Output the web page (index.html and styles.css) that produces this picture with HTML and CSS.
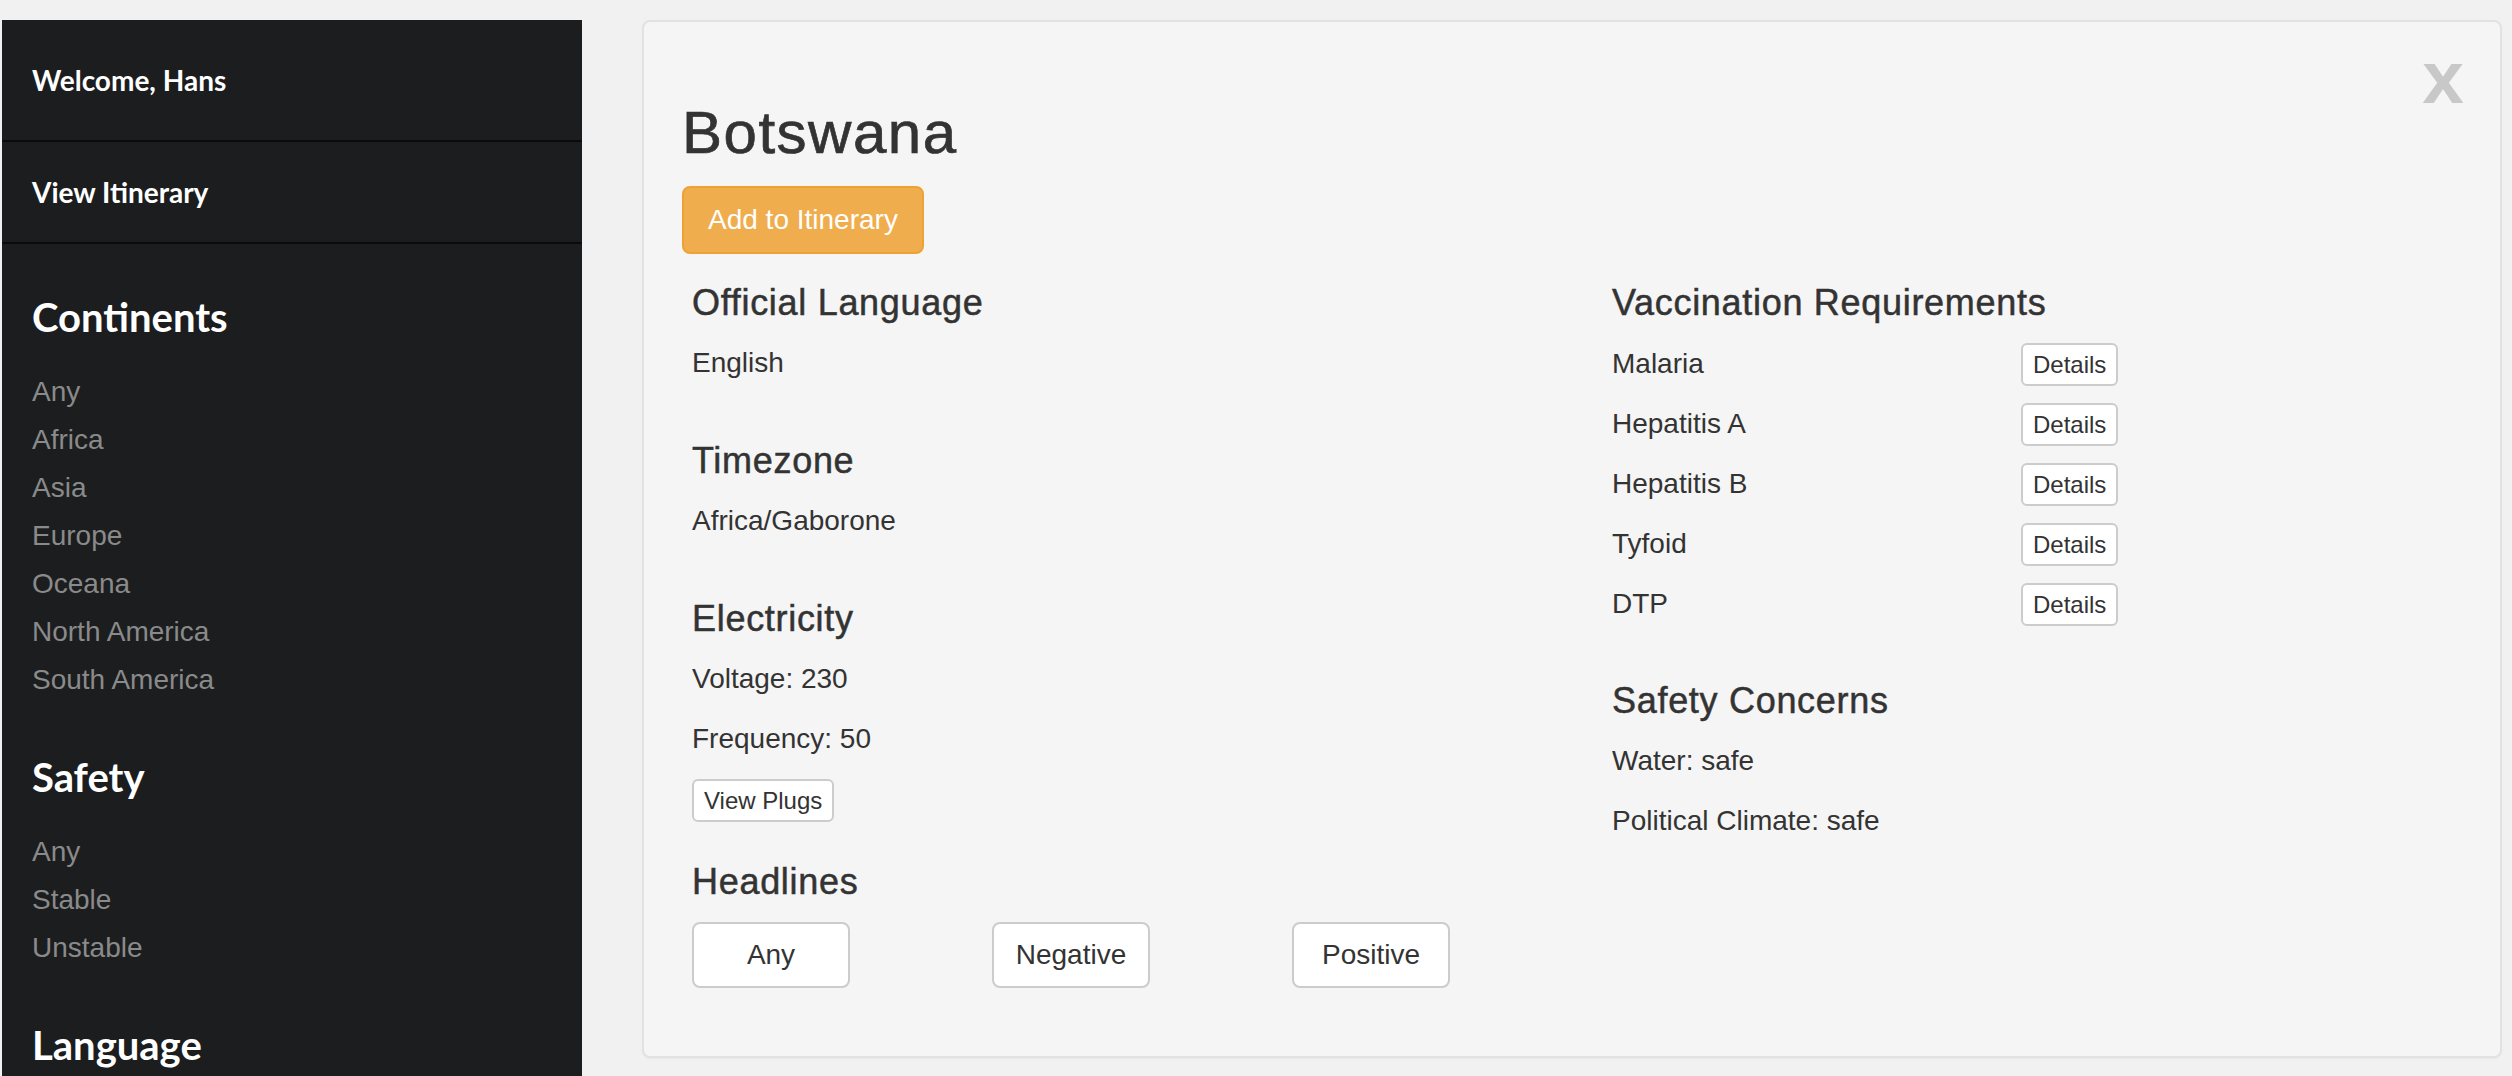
FILE: index.html
```html
<!DOCTYPE html>
<html lang="en">
<head>
<meta charset="utf-8">
<title>Botswana</title>
<link rel="stylesheet" href="styles.css">
</head>
<body>
<div class="page">
  <aside class="sidebar">
    <div class="nav-item welcome">Welcome, Hans</div>
    <div class="nav-item itinerary">View Itinerary</div>
    <div class="filter">
      <h2>Continents</h2>
      <ul>
        <li>Any</li>
        <li>Africa</li>
        <li>Asia</li>
        <li>Europe</li>
        <li>Oceana</li>
        <li>North America</li>
        <li>South America</li>
      </ul>
    </div>
    <div class="filter">
      <h2>Safety</h2>
      <ul>
        <li>Any</li>
        <li>Stable</li>
        <li>Unstable</li>
      </ul>
    </div>
    <div class="filter">
      <h2>Language</h2>
    </div>
  </aside>
  <main class="main">
    <section class="card">
      <span class="close">x</span>
      <h1>Botswana</h1>
      <div class="actions"><button class="btn btn-add">Add to Itinerary</button></div>
      <div class="cols">
        <div class="col">
          <div class="info">
            <h4>Official Language</h4>
            <p>English</p>
          </div>
          <div class="info">
            <h4>Timezone</h4>
            <p>Africa/Gaborone</p>
          </div>
          <div class="info">
            <h4>Electricity</h4>
            <p>Voltage: 230</p>
            <p>Frequency: 50</p>
            <div class="plugs"><button class="btn btn-xs">View Plugs</button></div>
          </div>
          <div class="info">
            <h4>Headlines</h4>
            <div class="headlines">
              <div><button class="btn btn-default">Any</button></div>
              <div><button class="btn btn-default">Negative</button></div>
              <div><button class="btn btn-default">Positive</button></div>
            </div>
          </div>
        </div>
        <div class="col">
          <div class="info">
            <h4>Vaccination Requirements</h4>
            <div class="vlist">
              <div class="vrow"><span class="vname">Malaria</span><button class="btn btn-xs">Details</button></div>
              <div class="vrow"><span class="vname">Hepatitis A</span><button class="btn btn-xs">Details</button></div>
              <div class="vrow"><span class="vname">Hepatitis B</span><button class="btn btn-xs">Details</button></div>
              <div class="vrow"><span class="vname">Tyfoid</span><button class="btn btn-xs">Details</button></div>
              <div class="vrow"><span class="vname">DTP</span><button class="btn btn-xs">Details</button></div>
            </div>
          </div>
          <div class="info">
            <h4>Safety Concerns</h4>
            <p>Water: safe</p>
            <p>Political Climate: safe</p>
          </div>
        </div>
      </div>
    </section>
  </main>
</div>
</body>
</html>
```

FILE: styles.css
```css
* { box-sizing: border-box; }

html, body {
  margin: 0;
  padding: 0;
}

body {
  background: #f1f1f1;
  color: #333333;
  font-family: "Liberation Sans", Arial, Helvetica, sans-serif;
}

.page {
  display: flex;
  height: 100vh;
  overflow: hidden;
}

/* Sidebar */
.sidebar {
  width: 580px;
  flex-shrink: 0;
  margin: 20px 0 0 2px;
  background: #1c1d1f;
}

.nav-item {
  font-family: Lato, "Liberation Sans", sans-serif;
  font-weight: 700;
  font-size: 28px;
  line-height: 40px;
  color: #ffffff;
  padding: 0 30px;
  border-bottom: 2px solid #0b0b0c;
}

.welcome { padding-top: 40px; padding-bottom: 40px; }
.itinerary { padding-top: 30px; padding-bottom: 30px; }

.filter {
  padding: 0 30px;
}

.filter h2 {
  font-family: Lato, "Liberation Sans", sans-serif;
  font-weight: 700;
  font-size: 40px;
  line-height: 48px;
  color: #ffffff;
  margin: 49px 0 27px;
}

.filter ul {
  list-style: none;
  margin: 0;
  padding: 0;
}

.filter li {
  font-size: 28px;
  line-height: 48px;
  color: #8a8a8a;
}

/* Main */
.main {
  flex: 1;
  min-width: 0;
  display: flex;
  flex-direction: column;
  padding: 20px 10px 18px 60px;
}

.card {
  flex: 1;
  position: relative;
  background: #f5f5f5;
  border: 2px solid #e2e2e2;
  border-radius: 8px;
  padding: 0 38px;
  box-shadow: 0 1px 2px rgba(0, 0, 0, 0.04);
}

.close {
  position: absolute;
  top: 18px;
  right: 36px;
  font-size: 75px;
  line-height: 75px;
  font-weight: 700;
  color: #c8c8c8;
}

.card h1 {
  font-size: 60px;
  font-weight: 400;
  line-height: 66px;
  letter-spacing: 1.5px;
  -webkit-text-stroke: 0.7px #333333;
  margin: 78px 0 20px;
  color: #333333;
}

.actions {
  margin-bottom: 29px;
}

.btn {
  font-family: "Liberation Sans", Arial, Helvetica, sans-serif;
  color: #333333;
  background: #ffffff;
  border: 2px solid #cccccc;
  cursor: pointer;
}

.btn-add {
  font-size: 28px;
  line-height: 40px;
  padding: 12px 24px;
  border-radius: 8px;
  background: #f0ad4e;
  border-color: #eea236;
  color: #ffffff;
}

.btn-xs {
  font-size: 24px;
  line-height: 35px;
  padding: 2px 10px;
  border-radius: 6px;
}

.btn-default {
  width: 158px;
  font-size: 28px;
  line-height: 40px;
  padding: 11px 0;
  border-radius: 8px;
}

.cols {
  display: grid;
  grid-template-columns: 920px 1fr;
  margin-left: 10px;
}

.info {
  padding-bottom: 38px;
}

.info h4 {
  font-size: 36px;
  font-weight: 400;
  line-height: 40px;
  letter-spacing: 0.7px;
  -webkit-text-stroke: 0.5px #333333;
  margin: 0 0 20px;
  color: #333333;
}

.info p {
  font-size: 28px;
  line-height: 40px;
  margin: 0 0 20px;
}

.plugs {
  margin-bottom: 2px;
}

.headlines {
  display: grid;
  grid-template-columns: repeat(3, 300px);
}

.vlist {
  margin-bottom: 0;
}

.vrow {
  display: flex;
  align-items: center;
  height: 42px;
  margin-bottom: 18px;
}

.vname {
  width: 409px;
  font-size: 28px;
  line-height: 40px;
}
```
